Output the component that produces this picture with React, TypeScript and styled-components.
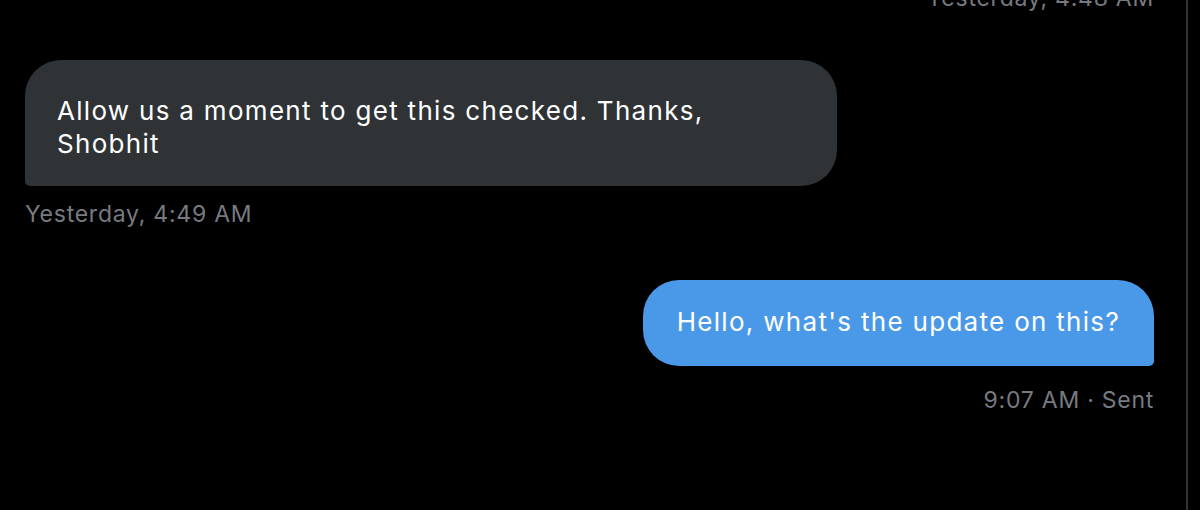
import React from "react";
import styled, { createGlobalStyle } from "styled-components";

const Global = createGlobalStyle`
  html, body { margin: 0; padding: 0; background: #000; }
  body { font-family: Inter, "Liberation Sans", Arial, sans-serif; -webkit-font-smoothing: antialiased; }
`;

const Page = styled.div`
  width: 1200px;
  height: 510px;
  background: #000;
  overflow: hidden;
  display: flex;
`;

const Conversation = styled.div`
  width: 1188px;
  box-sizing: border-box;
  border-right: 2px solid #2f3336;
  padding: 0 32px 0 25px;
  display: flex;
  flex-direction: column;
`;

const Thread = styled.div`
  margin-top: -16px;
  display: flex;
  flex-direction: column;
`;

const Group = styled.div<{ $mine?: boolean; $gap: number }>`
  display: flex;
  flex-direction: column;
  align-items: ${(p) => (p.$mine ? "flex-end" : "flex-start")};
  margin-bottom: ${(p) => p.$gap}px;
`;

const Bubble = styled.div<{ $mine?: boolean }>`
  box-sizing: border-box;
  max-width: 812px;
  font-size: 26px;
  line-height: 33px;
  letter-spacing: 1.3px;
  color: #ffffff;
  background: ${(p) => (p.$mine ? "#4a99e9" : "#2f3336")};
  border-radius: ${(p) => (p.$mine ? "36px 36px 5px 36px" : "36px 36px 36px 5px")};
  padding: ${(p) => (p.$mine ? "25px 34px 28px 34px" : "34px 32px 26px 32px")};
`;

const Meta = styled.div<{ $mine?: boolean; $top: number }>`
  margin-top: ${(p) => p.$top}px;
  font-size: 23px;
  line-height: 28px;
  letter-spacing: 0.75px;
  color: #777b80;
  text-align: ${(p) => (p.$mine ? "right" : "left")};
`;

export default function App() {
  return (
    <>
      <Global />
      <Page>
        <Conversation>
          <Thread>
            <Group $mine $gap={48}>
              <Meta $mine $top={0}>Yesterday, 4:48 AM</Meta>
            </Group>
            <Group $gap={52}>
              <Bubble>Allow us a moment to get this checked. Thanks, Shobhit</Bubble>
              <Meta $top={14}>Yesterday, 4:49 AM</Meta>
            </Group>
            <Group $mine $gap={0}>
              <Bubble $mine>Hello, what's the update on this?</Bubble>
              <Meta $mine $top={20}>9:07 AM · Sent</Meta>
            </Group>
          </Thread>
        </Conversation>
      </Page>
    </>
  );
}
